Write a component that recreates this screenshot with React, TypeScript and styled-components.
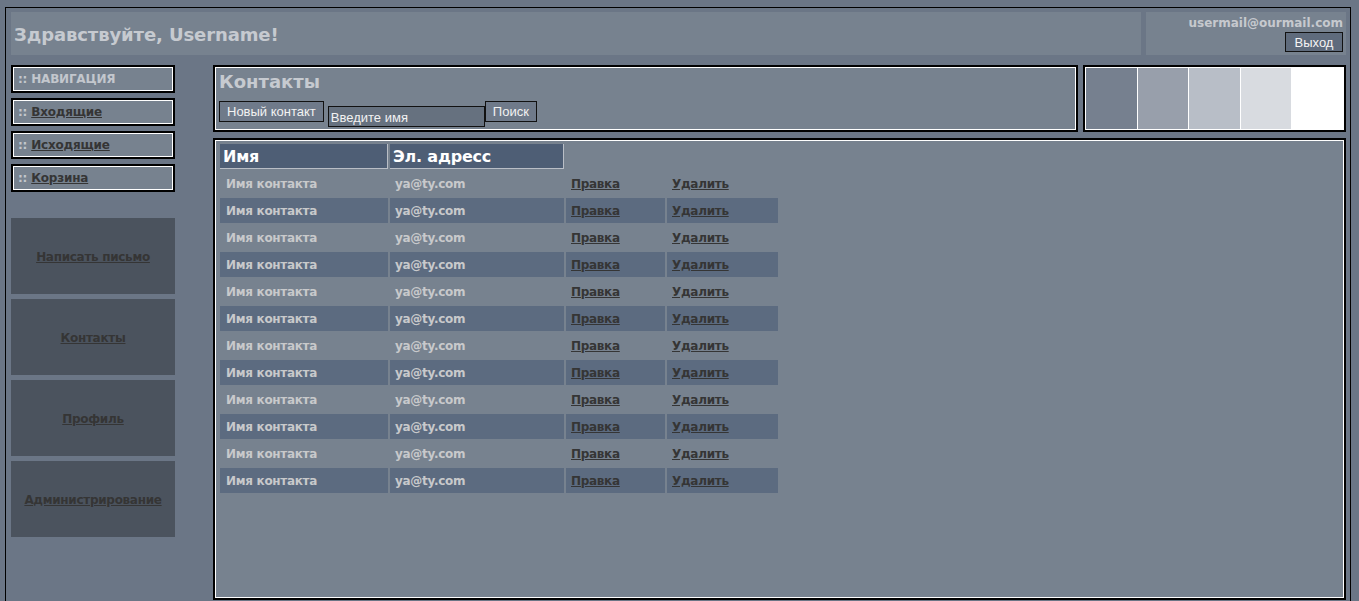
import React from "react";
import styled, { createGlobalStyle } from "styled-components";

const GlobalStyle = createGlobalStyle`
  html, body { margin: 0; padding: 0; }
  body {
    background: #6b7686;
    font-family: "DejaVu Sans", Verdana, sans-serif;
    overflow: hidden;
  }
`;

const Frame = styled.div`
  box-sizing: border-box;
  width: 1346px;
  min-height: 594px;
  margin: 7px 0 0 5px;
  border: 1px solid #000;
  border-bottom: none;
  padding: 4px 4px 0 5px;
`;

const HeaderRow = styled.div`
  display: grid;
  grid-template-columns: 1fr 200px;
  gap: 5px;
  height: 43px;
`;

const HeaderCell = styled.div`
  background: #77828f;
`;

const Greeting = styled(HeaderCell)`
  display: flex;
  align-items: center;
  padding: 2px 3px 0;
  color: #c6cad0;
  font-size: 18px;
  font-weight: bold;
  letter-spacing: -0.1px;
`;

const UserCell = styled(HeaderCell)`
  display: flex;
  flex-direction: column;
  align-items: flex-end;
  padding: 4px 3px 0 0;
  color: #c6c9ce;
  font-size: 12px;
  font-weight: bold;
`;

const LogoutButton = styled.button`
  margin-top: 2px;
  height: 20px;
  width: 58px;
  padding: 0;
  background: #5f6b7c;
  border: 1px solid #111;
  color: #f4f4f4;
  font-family: "Liberation Sans", Arial, sans-serif;
  font-size: 13px;
  cursor: pointer;
`;

const Body = styled.div`
  display: grid;
  grid-template-columns: 164px 1fr;
  column-gap: 38px;
  margin-top: 10px;
`;

const Sidebar = styled.div`
  display: flex;
  flex-direction: column;
`;

const NavList = styled.div`
  display: flex;
  flex-direction: column;
  gap: 5px;
`;

const FramedBox = styled.div`
  box-sizing: border-box;
  border: 2px solid #000;
  box-shadow: inset 0 0 0 1px #fff;
  background: #77828f;
`;

const NavItem = styled(FramedBox)`
  height: 28px;
  display: flex;
  align-items: center;
  padding-left: 5px;
  font-size: 12px;
  font-weight: bold;
  letter-spacing: -0.2px;
  color: #c3c7cd;
  gap: 4px;
`;

const Dots = styled.span`
  color: #c3c7cd;
`;

const DarkLink = styled.a`
  color: #353535;
  font-weight: bold;
  text-decoration: underline;
  cursor: pointer;
`;

const BigList = styled.div`
  display: flex;
  flex-direction: column;
  gap: 5px;
  margin-top: 26px;
`;

const BigBlock = styled.div`
  height: 76px;
  background: #4b535e;
  display: flex;
  align-items: center;
  justify-content: center;
  font-size: 12px;
  letter-spacing: -0.3px;
  padding-top: 1px;
  box-sizing: border-box;
`;

const Main = styled.div`
  display: flex;
  flex-direction: column;
  gap: 6px;
`;

const TopRow = styled.div`
  display: grid;
  grid-template-columns: 1fr 263px;
  gap: 5px;
  height: 67px;
`;

const ContactsBox = styled(FramedBox)`
  padding: 2px 4px 0 4px;
  display: flex;
  flex-direction: column;
`;

const Title = styled.div`
  color: #c6cad0;
  font-size: 18px;
  font-weight: bold;
  height: 32px;
  line-height: 26px;
`;

const Toolbar = styled.div`
  display: flex;
  align-items: flex-start;
`;

const ToolButton = styled.button`
  height: 21px;
  padding: 0 7px;
  background: #6f7a8a;
  border: 1px solid #111;
  color: #f2f2f2;
  font-family: "Liberation Sans", Arial, sans-serif;
  font-size: 13px;
  cursor: pointer;
`;

const SearchInput = styled.input`
  box-sizing: border-box;
  width: 157px;
  height: 21px;
  margin: 5px 0 0 4px;
  padding: 2px 2px 0;
  background: #66717f;
  border: 1px solid #111;
  color: #f2f2f2;
  font-family: "Liberation Sans", Arial, sans-serif;
  font-size: 13px;
  &::placeholder { color: #f2f2f2; opacity: 1; }
`;

const SwatchBox = styled(FramedBox)`
  padding: 1px;
  display: flex;
  gap: 1px;
  background: #fff;
`;

const Swatch = styled.div<{ $c: string }>`
  flex: 1;
  background: ${(p) => p.$c};
`;

const TableBox = styled(FramedBox)`
  height: 462px;
  padding: 2px 2px 0 3px;
`;

const Table = styled.table`
  border-spacing: 2px;
  border-collapse: separate;
  table-layout: fixed;
  font-size: 12px;
  font-weight: bold;
  letter-spacing: -0.3px;
`;

const HeadCell = styled.th`
  box-sizing: border-box;
  height: 25px;
  padding: 0 3px;
  text-align: left;
  background: #4e5e75;
  color: #fff;
  font-size: 16px;
  font-weight: bold;
  letter-spacing: -0.2px;
  border-right: 1px solid #b9bec6;
  border-bottom: 1px solid #b9bec6;
`;

const Cell = styled.td<{ $alt: boolean; $pad?: number }>`
  box-sizing: border-box;
  height: 25px;
  padding: 1px 0 0 ${(p) => p.$pad ?? 5}px;
  background: ${(p) => (p.$alt ? "#5c6b80" : "transparent")};
  color: #c8c9cb;
  white-space: nowrap;
`;

const swatches = ["#76808f", "#989fab", "#b8bec7", "#d8dbe0", "#ffffff"];

export default function App() {
  const rows = Array.from({ length: 12 }, (_, i) => i);
  return (
    <>
      <GlobalStyle />
      <Frame>
        <HeaderRow>
          <Greeting>Здравствуйте, Username!</Greeting>
          <UserCell>
            <span>usermail@ourmail.com</span>
            <LogoutButton>Выход</LogoutButton>
          </UserCell>
        </HeaderRow>
        <Body>
          <Sidebar>
            <NavList>
              <NavItem>
                <Dots>::</Dots>НАВИГАЦИЯ
              </NavItem>
              <NavItem>
                <Dots>::</Dots>
                <DarkLink>Входящие</DarkLink>
              </NavItem>
              <NavItem>
                <Dots>::</Dots>
                <DarkLink>Исходящие</DarkLink>
              </NavItem>
              <NavItem>
                <Dots>::</Dots>
                <DarkLink>Корзина</DarkLink>
              </NavItem>
            </NavList>
            <BigList>
              <BigBlock>
                <DarkLink>Написать письмо</DarkLink>
              </BigBlock>
              <BigBlock>
                <DarkLink>Контакты</DarkLink>
              </BigBlock>
              <BigBlock>
                <DarkLink>Профиль</DarkLink>
              </BigBlock>
              <BigBlock>
                <DarkLink>Администрирование</DarkLink>
              </BigBlock>
            </BigList>
          </Sidebar>
          <Main>
            <TopRow>
              <ContactsBox>
                <Title>Контакты</Title>
                <Toolbar>
                  <ToolButton>Новый контакт</ToolButton>
                  <SearchInput placeholder="Введите имя" />
                  <ToolButton>Поиск</ToolButton>
                </Toolbar>
              </ContactsBox>
              <SwatchBox>
                {swatches.map((c) => (
                  <Swatch key={c} $c={c} />
                ))}
              </SwatchBox>
            </TopRow>
            <TableBox>
              <Table>
                <colgroup>
                  <col style={{ width: 168 }} />
                  <col style={{ width: 174 }} />
                  <col style={{ width: 99 }} />
                  <col style={{ width: 111 }} />
                </colgroup>
                <thead>
                  <tr>
                    <HeadCell>Имя</HeadCell>
                    <HeadCell>Эл. адресс</HeadCell>
                  </tr>
                </thead>
                <tbody>
                  {rows.map((i) => {
                    const alt = i % 2 === 1;
                    return (
                      <tr key={i}>
                        <Cell $alt={alt} $pad={6}>Имя контакта</Cell>
                        <Cell $alt={alt}>ya@ty.com</Cell>
                        <Cell $alt={alt}>
                          <DarkLink>Правка</DarkLink>
                        </Cell>
                        <Cell $alt={alt}>
                          <DarkLink>Удалить</DarkLink>
                        </Cell>
                      </tr>
                    );
                  })}
                </tbody>
              </Table>
            </TableBox>
          </Main>
        </Body>
      </Frame>
    </>
  );
}
